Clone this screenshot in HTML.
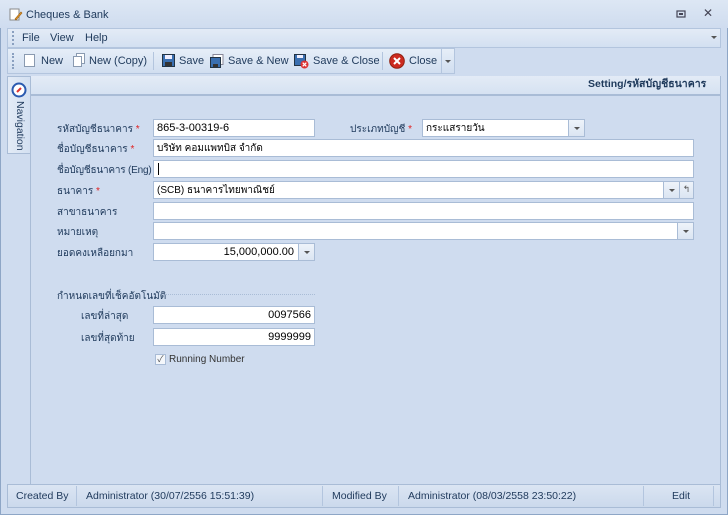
<!DOCTYPE html>
<html><head><meta charset="utf-8"><style>
*{box-sizing:border-box;margin:0;padding:0}
body{width:728px;height:515px;background:#c5d4e8;font-family:"Liberation Sans","Noto Sans CJK SC",sans-serif;font-size:11px;color:#1e395b;position:relative;overflow:hidden}
.a{position:absolute}
.win{left:0;top:0;width:728px;height:515px;border:1px solid #8ea6c6;background:#cfdcef}
.tb{left:0;top:0;width:728px;height:28px;background:linear-gradient(#dde7f4,#cfdcef)}
.menu{left:7px;top:28px;width:714px;height:20px;background:linear-gradient(#e3ebf6,#d3e0f1);border:1px solid #b3c5de}
.tool{left:7px;top:48px;width:448px;height:26px;background:linear-gradient(#e6eef8,#d1def0);border:1px solid #b3c5de}
.t{color:#1e395b;font-size:11px;white-space:nowrap}
.inp{background:#fff;border:1px solid #a9bcd6;height:18px;font-size:11px;line-height:13px;color:#000;padding:2px 3px;white-space:nowrap;overflow:hidden}
.th{font-size:10px}
.btn{background:linear-gradient(#eef3fa,#dbe5f2);border-left:1px solid #a9bcd6;height:16px;width:16px;top:0}
.arr{width:0;height:0;border-left:3px solid transparent;border-right:3px solid transparent;border-top:3px solid #555;position:absolute;left:5px;top:7px}
.lbl{color:#1e395b;font-size:10px;line-height:12px;white-space:nowrap;margin-top:2px}
.req{color:#e02020}
.sep{width:1px;background:#b3c5de}
</style></head><body>
<div class="a win"></div>
<div class="a tb"></div>
<svg class="a" style="left:9px;top:8px" width="14" height="14"><rect x="1" y="1" width="9" height="11" fill="#fff" stroke="#888"/><path d="M6 11 L12 4 L13 5 L7 12 Z" fill="#e8a030" stroke="#a06010" stroke-width=".6"/></svg>
<div class="a t" style="left:26px;top:9px">Cheques &amp; Bank</div>
<svg class="a" style="left:676px;top:10px" width="10" height="8"><rect x="1" y="1" width="8" height="6" fill="none" stroke="#445" stroke-width="1.2"/><rect x="3" y="3" width="4" height="2" fill="#445"/></svg>
<div class="a t" style="left:703px;top:6px;font-size:12px;color:#445">✕</div>
<div class="a menu"></div>
<div class="a" style="left:12px;top:31px;width:2px;height:14px;border-left:2px dotted #8aa0c0"></div>
<div class="a t" style="left:22px;top:32px">File</div>
<div class="a t" style="left:50px;top:32px">View</div>
<div class="a t" style="left:85px;top:32px">Help</div>
<div class="a" style="left:711px;top:36px;width:0;height:0;border-left:3px solid transparent;border-right:3px solid transparent;border-top:3px solid #555"></div>
<div class="a tool"></div>
<div class="a" style="left:441px;top:48px;width:14px;height:26px;border-left:1px solid #b3c5de"></div>
<div class="a" style="left:445px;top:60px;width:0;height:0;border-left:3px solid transparent;border-right:3px solid transparent;border-top:3px solid #555"></div>
<div class="a" style="left:12px;top:53px;width:2px;height:16px;border-left:2px dotted #8aa0c0"></div>
<div class="a" style="left:24px;top:54px;width:11px;height:13px;background:#fff;border:1px solid #8a9ab0"></div>
<div class="a t" style="left:41px;top:55px">New</div>
<div class="a" style="left:76px;top:53px;width:9px;height:11px;background:#fff;border:1px solid #8a9ab0"></div>
<div class="a" style="left:73px;top:56px;width:9px;height:11px;background:#fff;border:1px solid #8a9ab0"></div>
<div class="a t" style="left:89px;top:55px">New (Copy)</div>
<div class="a sep" style="left:153px;top:52px;height:18px"></div>
<svg class="a" style="left:162px;top:54px" width="13" height="13"><rect x=".5" y=".5" width="12" height="12" fill="#3a6fb0" stroke="#234"/><rect x="3" y="1" width="7" height="4" fill="#eef"/><rect x="3" y="8" width="7" height="4" fill="#333"/></svg>
<div class="a t" style="left:179px;top:55px">Save</div>
<svg class="a" style="left:210px;top:54px" width="14" height="14"><rect x="3" y=".5" width="10" height="10" fill="#fff" stroke="#889"/><rect x=".5" y="3.5" width="10" height="10" fill="#3a6fb0" stroke="#234"/><rect x="3" y="10" width="5" height="3" fill="#333"/></svg>
<div class="a t" style="left:228px;top:55px">Save &amp; New</div>
<svg class="a" style="left:294px;top:54px" width="15" height="15"><rect x=".5" y=".5" width="11" height="11" fill="#3a6fb0" stroke="#234"/><rect x="3" y="1" width="6" height="3" fill="#eef"/><circle cx="10.5" cy="10.5" r="4" fill="#d33"/><path d="M8.7 8.7l3.6 3.6M12.3 8.7l-3.6 3.6" stroke="#fff" stroke-width="1.2"/></svg>
<div class="a t" style="left:313px;top:55px">Save &amp; Close</div>
<div class="a sep" style="left:382px;top:52px;height:18px"></div>
<svg class="a" style="left:389px;top:53px" width="16" height="16"><circle cx="8" cy="8" r="7.3" fill="#cc2a20" stroke="#902010"/><path d="M5 5l6 6M11 5l-6 6" stroke="#fff" stroke-width="2"/></svg>
<div class="a t" style="left:409px;top:55px">Close</div>
<!-- nav -->
<div class="a" style="left:7px;top:76px;width:24px;height:408px;background:#cfdcef;border-right:1px solid #a9bcd6"></div>
<div class="a" style="left:7px;top:76px;width:24px;height:78px;background:linear-gradient(90deg,#e3ebf6,#d3e0f1);border:1px solid #a9bcd6"></div>
<svg class="a" style="left:11px;top:82px" width="16" height="16"><circle cx="8" cy="8" r="6.5" fill="#fff" stroke="#2a5ab0" stroke-width="2"/><path d="M6 10l4-4" stroke="#d33" stroke-width="2"/></svg>
<div class="a t" style="top:101px;transform:rotate(90deg);transform-origin:left top;left:26px;font-size:10.5px">Navigation</div>
<!-- header -->
<div class="a" style="left:31px;top:76px;width:690px;height:20px;background:linear-gradient(#e3ebf6,#d6e2f2);border-bottom:2px solid #a9bcd6"></div>
<div class="a t" style="left:588px;top:78px;font-weight:bold;font-size:10.5px;line-height:13px">Setting/รหัสบัญชีธนาคาร</div>
<div class="a" style="left:720px;top:76px;width:1px;height:408px;background:#a9bcd6"></div>
<!-- form -->
<div class="a lbl" style="left:57px;top:122px">รหัสบัญชีธนาคาร <span class="req">*</span></div>
<div class="a inp" style="left:153px;top:119px;width:162px">865-3-00319-6</div>
<div class="a lbl" style="left:350px;top:122px">ประเภทบัญชี <span class="req">*</span></div>
<div class="a inp th" style="left:422px;top:119px;width:163px">กระแสรายวัน<div class="a btn" style="right:0"><div class="arr"></div></div></div>
<div class="a lbl" style="left:57px;top:142px">ชื่อบัญชีธนาคาร <span class="req">*</span></div>
<div class="a inp th" style="left:153px;top:139px;width:541px">บริษัท คอมแพทบิส จำกัด</div>
<div class="a lbl" style="left:57px;top:163px;letter-spacing:-0.2px">ชื่อบัญชีธนาคาร (Eng)</div>
<div class="a inp" style="left:153px;top:160px;width:541px"><span style="border-left:1px solid #000;margin-left:1px">&nbsp;</span></div>
<div class="a lbl" style="left:57px;top:184px">ธนาคาร <span class="req">*</span></div>
<div class="a inp th" style="left:153px;top:181px;width:541px">(SCB) ธนาคารไทยพาณิชย์<div class="a btn" style="right:14px"><div class="arr"></div></div><div class="a btn" style="right:0;font-size:9px;color:#555;text-align:center;line-height:14px;width:14px">↰</div></div>
<div class="a lbl" style="left:57px;top:205px">สาขาธนาคาร</div>
<div class="a inp" style="left:153px;top:202px;width:541px"></div>
<div class="a lbl" style="left:57px;top:225px">หมายเหตุ</div>
<div class="a inp" style="left:153px;top:222px;width:541px"><div class="a btn" style="right:0"><div class="arr"></div></div></div>
<div class="a lbl" style="left:57px;top:246px">ยอดคงเหลือยกมา</div>
<div class="a inp" style="left:153px;top:243px;width:162px;text-align:right;padding-right:20px">15,000,000.00<div class="a btn" style="right:0"><div class="arr"></div></div></div>
<div class="a lbl" style="left:57px;top:289px">กำหนดเลขที่เช็คอัตโนมัติ</div>
<div class="a" style="left:165px;top:294px;width:150px;border-top:1px dotted #a9bcd6"></div>
<div class="a lbl" style="left:81px;top:309px">เลขที่ล่าสุด</div>
<div class="a inp" style="left:153px;top:306px;width:162px;text-align:right">0097566</div>
<div class="a lbl" style="left:81px;top:331px">เลขที่สุดท้าย</div>
<div class="a inp" style="left:153px;top:328px;width:162px;text-align:right">9999999</div>
<div class="a" style="left:155px;top:354px;width:11px;height:11px;border:1px solid #a9bcd6;background:#f4f7fb;font-size:9px;line-height:9px;text-align:center;color:#555">✓</div>
<div class="a lbl" style="left:169px;top:352px;color:#333">Running Number</div>
<!-- status -->
<div class="a" style="left:7px;top:484px;width:714px;height:24px;background:linear-gradient(#dbe5f3,#cbd9ec);border:1px solid #a9bcd6"></div>
<div class="a t" style="left:16px;top:490px;font-size:10.5px">Created By</div>
<div class="a sep" style="left:76px;top:486px;height:20px"></div>
<div class="a t" style="left:86px;top:490px;font-size:10.5px">Administrator (30/07/2556 15:51:39)</div>
<div class="a sep" style="left:322px;top:486px;height:20px"></div>
<div class="a t" style="left:332px;top:490px;font-size:10.5px">Modified By</div>
<div class="a sep" style="left:398px;top:486px;height:20px"></div>
<div class="a t" style="left:408px;top:490px;font-size:10.5px">Administrator (08/03/2558 23:50:22)</div>
<div class="a sep" style="left:643px;top:486px;height:20px"></div>
<div class="a t" style="left:672px;top:490px;font-size:10.5px">Edit</div>
<div class="a sep" style="left:713px;top:486px;height:20px"></div>
</body></html>
